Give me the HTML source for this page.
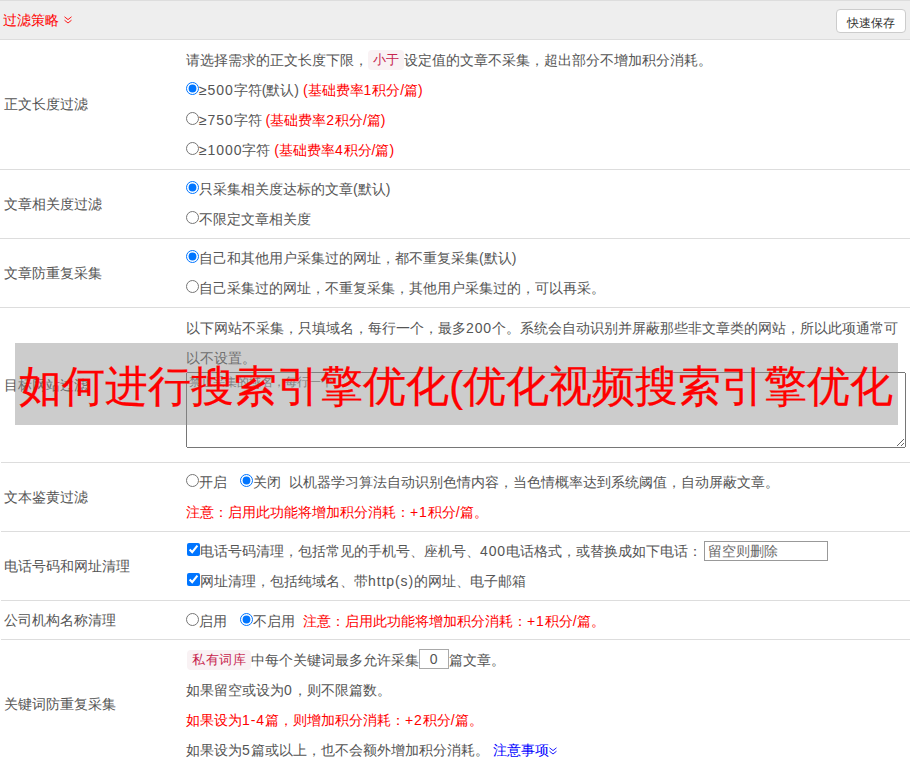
<!DOCTYPE html>
<html><head><meta charset="utf-8">
<style>
*{box-sizing:border-box}
html,body{margin:0;padding:0;background:#fff;width:912px;height:768px;overflow:hidden}
body{font-family:"Liberation Sans",sans-serif;font-size:14px;color:#555;position:relative}
.hr{position:absolute;left:0;width:910px;height:1px;background:#ddd}
.lb{position:absolute;left:4px;height:20px;line-height:20px;white-space:nowrap}
.ln{position:absolute;left:186px;height:20px;line-height:20px;white-space:nowrap}
i{font-style:normal;letter-spacing:0.9px}
.r{color:#f00}
.b{color:#00f}
input{margin:0;vertical-align:middle;position:relative;top:-3px}
code{display:inline-block;font-family:"Liberation Sans",sans-serif;font-size:13px;color:#c7254e;background:#f9f2f4;border-radius:4px;height:20px;line-height:20px;text-align:center;position:relative;top:-1px}
.inp{display:inline-block;border:1px solid #a9a9a9;height:20px;vertical-align:middle;background:#fff}
</style></head><body>
<!-- header -->
<div style="position:absolute;left:0;top:0;width:910px;height:40px;background:#eee;border-top:1px solid #ddd;border-bottom:1px solid #ddd"></div>
<div class="lb r" style="top:10px;left:3px">过滤策略 <svg width="9" height="9" style="position:absolute;left:61px;top:6px" viewBox="0 0 9 9"><path d="M0.5 0.8L4 3.6L7.5 0.8M0.5 4.2L4 7L7.5 4.2" stroke="#f00" fill="none" stroke-width="0.9"/></svg></div>
<div style="position:absolute;left:836px;top:9px;width:70px;height:24px;border:1px solid #ccc;border-radius:4px;background:#fff;font-size:12px;color:#333;text-align:center;line-height:22px;padding-top:2px">快速保存</div>

<!-- row1 -->
<div class="lb" style="top:94px">正文长度过滤</div>
<div class="ln" style="top:50px">请选择需求的正文长度下限，<code style="width:36px">小于</code>设定值的文章不采集，超出部分不增加积分消耗。</div>
<div class="ln" style="top:80px"><input type="radio" checked><i>≥500</i>字符(默认) <span class="r">(基础费率<i>1</i>积分/篇)</span></div>
<div class="ln" style="top:110px"><input type="radio"><i>≥750</i>字符 <span class="r">(基础费率<i>2</i>积分/篇)</span></div>
<div class="ln" style="top:140px"><input type="radio"><i>≥1000</i>字符 <span class="r">(基础费率<i>4</i>积分/篇)</span></div>
<div class="hr" style="top:169px"></div>

<!-- row2 -->
<div class="lb" style="top:194px">文章相关度过滤</div>
<div class="ln" style="top:179px"><input type="radio" checked>只采集相关度达标的文章(默认)</div>
<div class="ln" style="top:209px"><input type="radio">不限定文章相关度</div>
<div class="hr" style="top:238px"></div>

<!-- row3 -->
<div class="lb" style="top:263px">文章防重复采集</div>
<div class="ln" style="top:248px"><input type="radio" checked>自己和其他用户采集过的网址，都不重复采集(默认)</div>
<div class="ln" style="top:278px"><input type="radio">自己采集过的网址，不重复采集，其他用户采集过的，可以再采。</div>
<div class="hr" style="top:307px"></div>

<!-- row4 -->
<div class="lb" style="top:375px">目标网站过滤</div>
<div class="ln" style="top:318px">以下网站不采集，只填域名，每行一个，最多<i>200</i>个。系统会自动识别并屏蔽那些非文章类的网站，所以此项通常可</div>
<div class="ln" style="top:348px">以不设置。</div>
<textarea placeholder="禁止采集的域名，每行一个" style="position:absolute;left:186px;top:372px;width:720px;height:76px;margin:0;font-family:'Liberation Sans',sans-serif;font-size:12px;line-height:16px;padding:1px 2px"></textarea>
<div class="hr" style="top:462px;left:1px;width:909px"></div>

<!-- row5 -->
<div class="lb" style="top:487px">文本鉴黄过滤</div>
<div class="ln" style="top:472px"><input type="radio">开启<input type="radio" checked style="margin-left:13px">关闭<span style="margin-left:8px">以机器学习算法自动识别色情内容，当色情概率达到系统阈值，自动屏蔽文章。</span></div>
<div class="ln r" style="top:502px">注意：启用此功能将增加积分消耗：<i>+1</i>积分/篇。</div>
<div class="hr" style="top:531px;left:1px;width:909px"></div>

<!-- row6 -->
<div class="lb" style="top:556px">电话号码和网址清理</div>
<div class="ln" style="top:541px"><input type="checkbox" checked style="margin-left:1px">电话号码清理，包括常见的手机号、座机号、<i>400</i>电话格式，或替换成如下电话：</div>
<div style="position:absolute;left:704px;top:541px;width:124px;height:20px;border:1px solid #999;color:#6a6a6a;padding-left:3px;line-height:19px">留空则删除</div>
<div class="ln" style="top:571px"><input type="checkbox" checked style="margin-left:1px">网址清理，包括纯域名、带<i>http(s)</i>的网址、电子邮箱</div>
<div class="hr" style="top:600px;left:1px;width:909px"></div>

<!-- row7 -->
<div class="lb" style="top:610px">公司机构名称清理</div>
<div class="ln" style="top:611px"><input type="radio">启用<input type="radio" checked style="margin-left:13px">不启用<span class="r" style="margin-left:8px">注意：启用此功能将增加积分消耗：<i>+1</i>积分/篇。</span></div>
<div class="hr" style="top:639px;left:1px;width:909px"></div>

<!-- row8 -->
<div class="lb" style="top:694px">关键词防重复采集</div>
<div class="ln" style="top:650px"><code style="width:64px;margin-left:1px;letter-spacing:0.7px;text-indent:0.7px">私有词库</code>中每个关键词最多允许采集<span class="inp" style="width:30px;text-align:center;line-height:18px;position:relative;top:-2px"><i>0</i></span>篇文章。</div>
<div class="ln" style="top:680px">如果留空或设为<i>0</i>，则不限篇数。</div>
<div class="ln r" style="top:710px">如果设为<i>1-4</i>篇，则增加积分消耗：<i>+2</i>积分/篇。</div>
<div class="ln" style="top:740px">如果设为<i>5</i>篇或以上，也不会额外增加积分消耗。 <span class="b">注意事项<svg width="8" height="8" style="margin-left:0px" viewBox="0 0 8 8"><path d="M0.5 0.8L4 3.6L7.5 0.8M0.5 4.2L4 7L7.5 4.2" stroke="#00f" fill="none" stroke-width="0.9"/></svg></span></div>

<!-- overlay -->
<div style="position:absolute;left:15px;top:343px;width:883px;height:82px;background:rgba(142,142,142,0.45)"></div>
<div style="position:absolute;left:19px;top:345px;height:82px;line-height:82px;font-size:43px;-webkit-text-stroke:0.2px #f00;color:#f00;white-space:nowrap">如何进行搜索引擎优化(优化视频搜索引擎优化</div>
</body></html>
